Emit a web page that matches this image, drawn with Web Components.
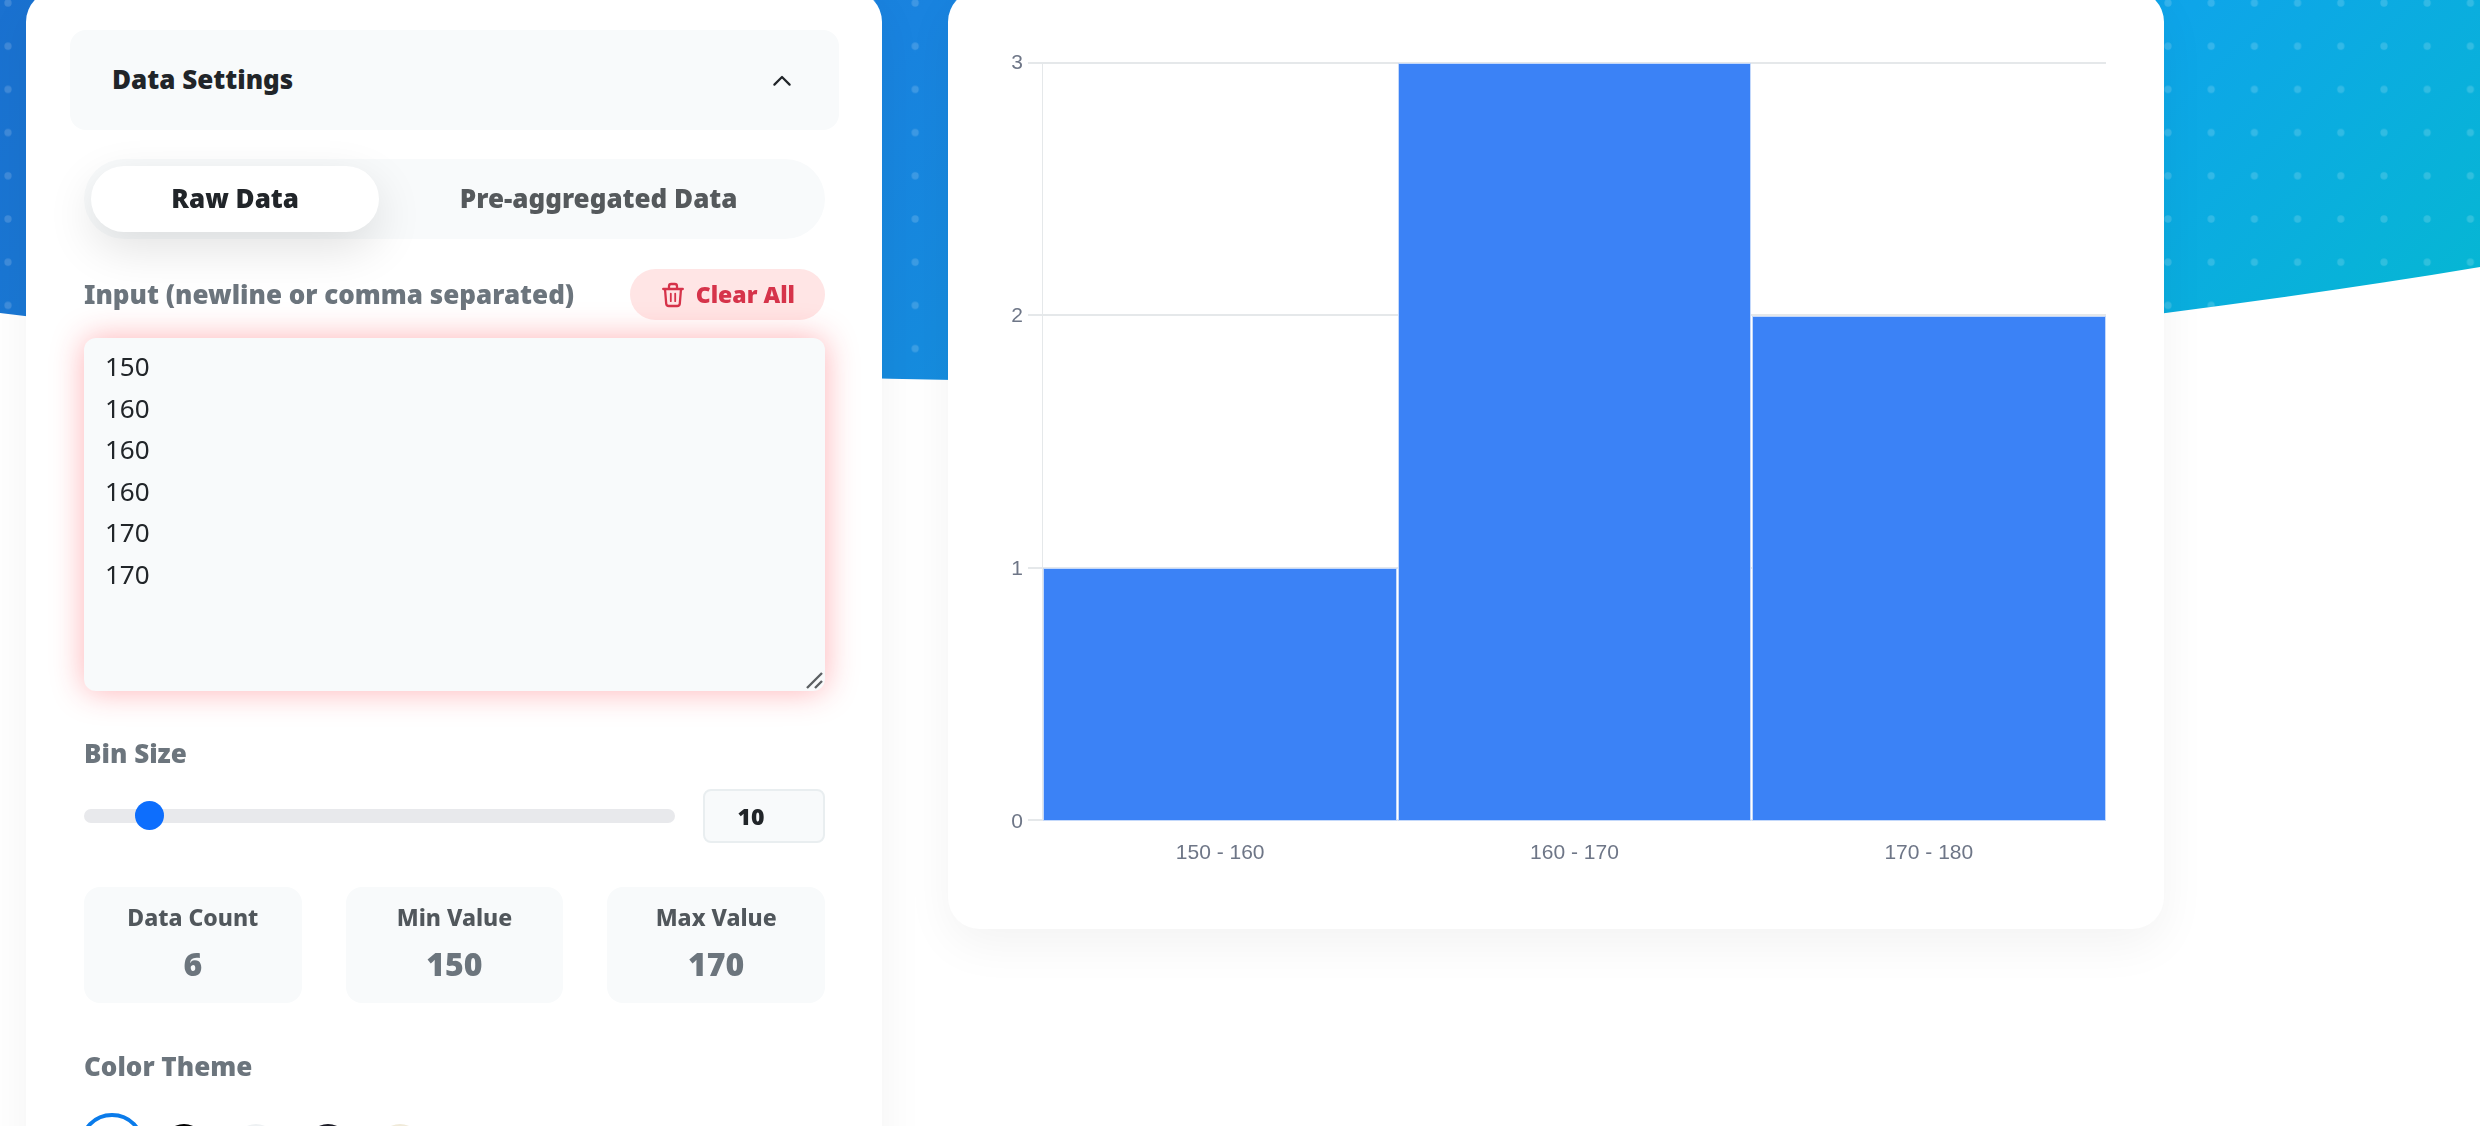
<!DOCTYPE html>
<html lang="en">
<head>
<meta charset="utf-8">
<title>Histogram Maker</title>
<style>
  html { scrollbar-width: none; }
  body {
    margin: 0;
    background: #fff;
    color: #212529;
    font: 26px/1.6 "Noto Sans", sans-serif;
  }
</style>
</head>
<body>
<histogram-page>
  <settings-card slot="settings"></settings-card>
  <histogram-chart slot="chart" max="3" bins="150 - 160:1,160 - 170:3,170 - 180:2"></histogram-chart>
</histogram-page>

<script>
const define = (name, html, setup) => {
  const template = document.createElement('template');
  template.innerHTML = html;
  customElements.define(name, class extends HTMLElement {
    constructor() {
      super();
      this.attachShadow({ mode: 'open' }).append(template.content.cloneNode(true));
    }
    connectedCallback() { if (setup) setup(this, this.shadowRoot); }
  });
};

define('hero-backdrop', `
  <style>
    :host { display: block; }
    svg { display: block; width: 100%; height: 420px; }
  </style>
  <svg viewBox="0 0 2480 420" preserveAspectRatio="none" aria-hidden="true">
    <defs>
      <linearGradient id="sky" gradientUnits="userSpaceOnUse" x1="0" y1="0" x2="1374" y2="1374">
        <stop offset="0" stop-color="#1a71d0"/>
        <stop offset=".1" stop-color="#1a76d3"/>
        <stop offset=".34" stop-color="#1983df"/>
        <stop offset=".46" stop-color="#168bde"/>
        <stop offset=".8" stop-color="#0ea5e9"/>
        <stop offset="1" stop-color="#06b6d4"/>
      </linearGradient>
      <pattern id="dots" patternUnits="userSpaceOnUse" x="-13.6" y="-18.6" width="43.2" height="43.2">
        <circle cx="21.6" cy="21.6" r="3.6" fill="#fff" fill-opacity=".16"/>
      </pattern>
    </defs>
    <path fill="url(#sky)" d="M0 0V313C827 415 1653 404 2480 267V0Z"/>
    <path fill="url(#dots)" d="M0 0V313C827 415 1653 404 2480 267V0Z"/>
  </svg>`);

define('histogram-page', `
  <style>
    :host { display: block; position: relative; height: 100vh; overflow: auto; scrollbar-width: none; }
    hero-backdrop { position: absolute; inset: 0 0 auto; z-index: -1; }
    main {
      display: grid;
      grid-template-columns: 856fr 1216fr;
      align-items: start;
      gap: 66px;
      margin-top: -10px;
      padding: 0 316px 64px 26px;
    }
  </style>
  <hero-backdrop></hero-backdrop>
  <main>
    <slot name="settings"></slot>
    <slot name="chart"></slot>
  </main>`);

define('panel-header', `
  <style>
    :host { display: block; }
    button {
      display: flex; align-items: center; justify-content: space-between;
      box-sizing: border-box; width: 100%; height: 100px; padding: 0 48px 0 42px;
      border: 0; border-radius: 16px; background: #f8fafb;
      color: inherit; font: inherit; font-weight: 900; cursor: pointer;
    }
    svg { width: 18px; height: 11px; }
  </style>
  <button type="button" aria-expanded="true">
    <slot></slot>
    <svg viewBox="0 0 18 11" fill="none" stroke="currentColor" stroke-width="2.2" stroke-linecap="round" stroke-linejoin="round" aria-hidden="true"><path d="M1.4 9.6 9 2l7.6 7.6"/></svg>
  </button>`);

define('mode-tabs', `
  <style>
    :host { display: flex; padding: 7px; border-radius: 40px; background: #f8fafb; }
    button {
      height: 66px; padding: 0; border: 0; border-radius: 33px;
      background: none; color: #55595c; font: inherit; font-weight: 900; cursor: pointer;
    }
    button:first-of-type { flex: 288; }
    button:last-of-type { flex: 438; }
    button[aria-selected="true"] { background: #fff; color: #212529; box-shadow: 0 16px 48px rgba(0, 0, 0, .12); }
  </style>
  <button type="button" role="tab" aria-selected="true">Raw Data</button>
  <button type="button" role="tab" aria-selected="false">Pre-aggregated Data</button>`);

define('data-input', `
  <style>
    :host { display: grid; gap: 18px; }
    .row { display: flex; align-items: center; justify-content: space-between; }
    label { color: #6c757d; font-weight: 900; }
    button {
      display: flex; align-items: center; justify-content: center; gap: 12px;
      height: 51px; padding: 0 30px 0 32px; border: 0; border-radius: 26px;
      background: #ffe5e5; color: #d6334a; font: inherit; font-size: 23px; font-weight: 900; cursor: pointer;
    }
    button svg { width: 22px; height: 26px; }
    .field { display: grid; position: relative; }
    textarea {
      box-sizing: border-box; width: 100%; height: 353px; padding: 8px 21px;
      border: 0; border-radius: 12px; outline: 0; resize: none;
      background: #f8fafb; color: #212529; font: inherit;
      box-shadow: 0 0 32px rgba(255, 40, 50, .36);
    }
    .grip { position: absolute; right: 2px; bottom: 2px; width: 17px; height: 17px; }
  </style>
  <div class="row">
    <label for="values">Input (newline or comma separated)</label>
    <button type="button">
      <svg viewBox="0 0 22 26" fill="none" stroke="currentColor" stroke-width="2.3" stroke-linecap="round" stroke-linejoin="round" aria-hidden="true">
        <path d="M1.2 7h19.6M7 6.6V4.2Q7 2 9.2 2h3.6Q15 2 15 4.2v2.4M3 7l1.2 14.6Q4.4 24 6.8 24h8.4q2.4 0 2.6-2.4L19 7"/>
        <path d="M8.8 11.6v7.6M13.2 11.6v7.6" stroke-width="1.8"/>
      </svg>
      Clear All
    </button>
  </div>
  <div class="field">
    <textarea id="values" spellcheck="false">150
160
160
160
170
170</textarea>
    <svg class="grip" viewBox="0 0 17 17" stroke="#5c6063" stroke-width="2.4" aria-hidden="true"><path d="M1 16 16 1M9 16l7-7"/></svg>
  </div>`);

define('bin-size', `
  <style>
    :host { display: grid; gap: 15px; }
    label { color: #6c757d; font-weight: 900; line-height: 42px; }
    .row { display: flex; align-items: center; gap: 28px; }
    input { box-sizing: border-box; margin: 0; }
    input[type=range] { appearance: none; flex: 1; min-width: 0; height: 30px; background: none; }
    input[type=range]::-webkit-slider-runnable-track { height: 14px; border-radius: 7px; background: #e8e9ec; }
    input[type=range]::-webkit-slider-thumb {
      appearance: none; width: 29px; height: 29px; margin-top: -8px; border-radius: 50%; background: #0d6efd;
    }
    input[type=number] {
      appearance: textfield; width: 122px; height: 54px; padding: 0 26px 0 0;
      border: 2px solid #e9eef0; border-radius: 8px; background: #f8fafb;
      color: #212529; font: inherit; font-size: 23px; font-weight: 900; text-align: center;
    }
    input[type=number]::-webkit-inner-spin-button { display: none; }
  </style>
  <label for="bin">Bin Size</label>
  <div class="row">
    <input id="bin" type="range" min="1" max="100" value="10">
    <input type="number" value="10" aria-label="Bin Size value">
  </div>`);

define('stat-card', `
  <style>
    :host {
      display: grid; justify-items: center; align-content: center; height: 116px; padding-bottom: 3px;
      box-sizing: border-box; border-radius: 16px; background: #f8fafb; font-weight: 800;
    }
    .name { color: #51575c; font-size: 23px; line-height: 40px; }
    .value { color: #6c757d; font-size: 32px; font-weight: 900; line-height: 53px; }
  </style>
  <span class="name"><slot></slot></span>
  <span class="value"><slot name="value"></slot></span>`);

define('color-theme', `
  <style>
    :host { display: block; }
    fieldset { display: grid; gap: 31px; margin: 0; padding: 0; border: 0; min-width: 0; }
    legend { float: left; padding: 0; color: #6c757d; font-weight: 900; line-height: 42px; }
    .row { display: flex; gap: 16px; }
    input {
      appearance: none; box-sizing: border-box; width: 56px; height: 56px; margin: 0;
      border: 6px solid transparent; border-radius: 50%; background: var(--swatch) padding-box;
    }
    input:checked { outline: 4px solid #0a7bea; outline-offset: 1px; }
  </style>
  <fieldset>
    <legend>Color Theme</legend>
    <div class="row">
      <input type="radio" name="theme" aria-label="White" style="--swatch: #fff" checked>
      <input type="radio" name="theme" aria-label="Black" style="--swatch: #000">
      <input type="radio" name="theme" aria-label="Light grey" style="--swatch: #eef1f3">
      <input type="radio" name="theme" aria-label="Navy" style="--swatch: #1b1b26">
      <input type="radio" name="theme" aria-label="Cream" style="--swatch: #f0ead9">
    </div>
  </fieldset>`);

define('settings-card', `
  <style>
    :host {
      display: block; box-sizing: border-box; padding: 40px 43px 58px 44px;
      border-radius: 32px; background: #fff; box-shadow: 0 16px 48px rgba(0, 0, 0, .05);
    }
    .body { display: flex; flex-direction: column; padding: 29px 14px 0; }
    data-input { margin-top: 30px; }
    bin-size { margin-top: 41px; }
    .stats { display: grid; grid-template-columns: repeat(3, 1fr); gap: 44px; margin-top: 44px; }
    color-theme { margin-top: 42px; }
  </style>
  <panel-header>Data Settings</panel-header>
  <div class="body">
    <mode-tabs role="tablist"></mode-tabs>
    <data-input></data-input>
    <bin-size></bin-size>
    <div class="stats">
      <stat-card>Data Count<span slot="value">6</span></stat-card>
      <stat-card>Min Value<span slot="value">150</span></stat-card>
      <stat-card>Max Value<span slot="value">170</span></stat-card>
    </div>
    <color-theme></color-theme>
  </div>`);

define('histogram-chart', `
  <style>
    :host {
      display: block; box-sizing: border-box; padding: 56px 58px 61px 60px;
      border-radius: 32px; background: #fff; box-shadow: 0 16px 48px rgba(0, 0, 0, .05);
      color: #6e7687; font: 21px/32px "Liberation Sans", Arial, sans-serif;
    }
    figure { display: grid; grid-template-columns: 15px 1fr; column-gap: 5px; margin: 0; }
    .scale { display: flex; flex-direction: column; justify-content: space-between; text-align: right; }
    .plot { display: grid; margin: 16px 0; height: 759px; }
    .lines, .bars { grid-area: 1 / 1; }
    .lines { display: flex; flex-direction: column; justify-content: space-between; }
    .lines i { height: 2px; background: #e5e8ea; }
    .bars { display: flex; align-items: flex-end; gap: 1px; margin-left: 14px; padding-top: 1px; border-left: 1px solid #e5e8ea; }
    .bars i { flex: 1; box-sizing: border-box; border: 1px solid #c3d8fb; background: #3b82f6; }
    .names { grid-column: 2; display: flex; margin: -1px 0 0 15px; }
    .names span { flex: 1; text-align: center; }
  </style>
  <figure>
    <div class="scale"></div>
    <div class="plot"><div class="lines"></div><div class="bars"></div></div>
    <div class="names"></div>
  </figure>`, (host, root) => {
  const max = Number(host.getAttribute('max'));
  const make = (parent, tag, text) => {
    const el = document.createElement(tag);
    if (text !== undefined) el.textContent = text;
    root.querySelector(parent).append(el);
    return el;
  };
  for (let v = max; v >= 0; v--) {
    make('.scale', 'span', v);
    make('.lines', 'i');
  }
  for (const bin of host.getAttribute('bins').split(',')) {
    const [name, count] = bin.split(':');
    make('.bars', 'i').style.height = `${100 * count / max}%`;
    make('.names', 'span', name);
  }
});
</script>
</body>
</html>
